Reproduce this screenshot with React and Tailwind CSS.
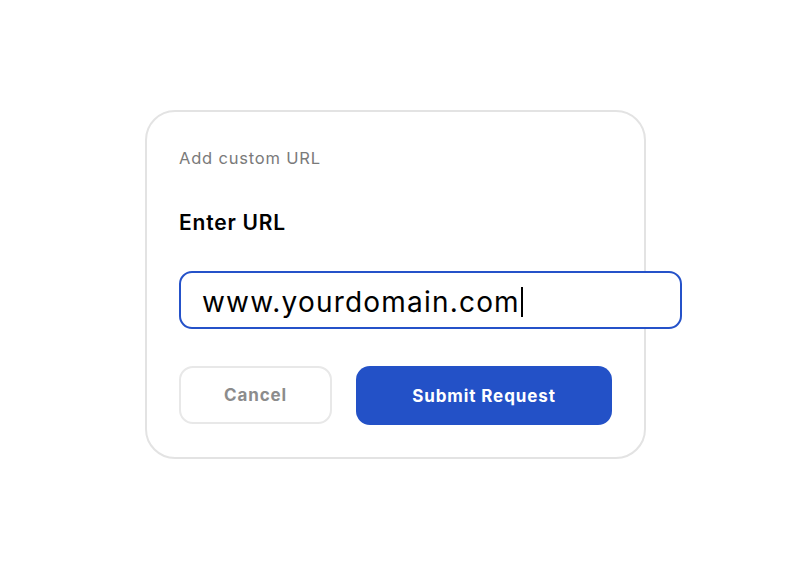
export default function App() {
  return (
    <div className="min-h-[568px] w-full bg-white pl-[145px] pt-[110px] font-['Inter',sans-serif]">
      <div className="flex h-[349px] w-[501px] flex-col rounded-[30px] border-2 border-[#e3e3e3] px-[32px] pt-[34px]">
        <p className="text-[16.5px] leading-[24px] tracking-[0.8px] text-[#7a7a7a]">Add custom URL</p>
        <h2 className="mt-[39px] text-[21px] font-semibold leading-[28px] tracking-[0.8px] text-black">
          Enter URL
        </h2>
        <div className="mt-[34px] flex h-[58px] w-[503px] shrink-0 items-center rounded-[13px] border-2 border-[#2552c9] bg-white pl-[21px] pt-[4px]">
          <span className="text-[28px] leading-none tracking-[1.2px] text-black">www.yourdomain.com</span>
          <span className="ml-[1px] h-[30px] w-[2.5px] bg-black" />
        </div>
        <div className="mt-[37px] flex gap-[24px]">
          <button className="h-[58px] w-[153px] rounded-[14px] border-2 border-[#e8e8e8] pt-[2px] text-[17px] font-bold tracking-[0.9px] text-[#8c8c8c]">
            Cancel
          </button>
          <button className="h-[59px] w-[256px] rounded-[14px] bg-[#2351c7] pt-[2px] text-[17px] font-bold tracking-[0.9px] text-white">
            Submit Request
          </button>
        </div>
      </div>
    </div>
  );
}
